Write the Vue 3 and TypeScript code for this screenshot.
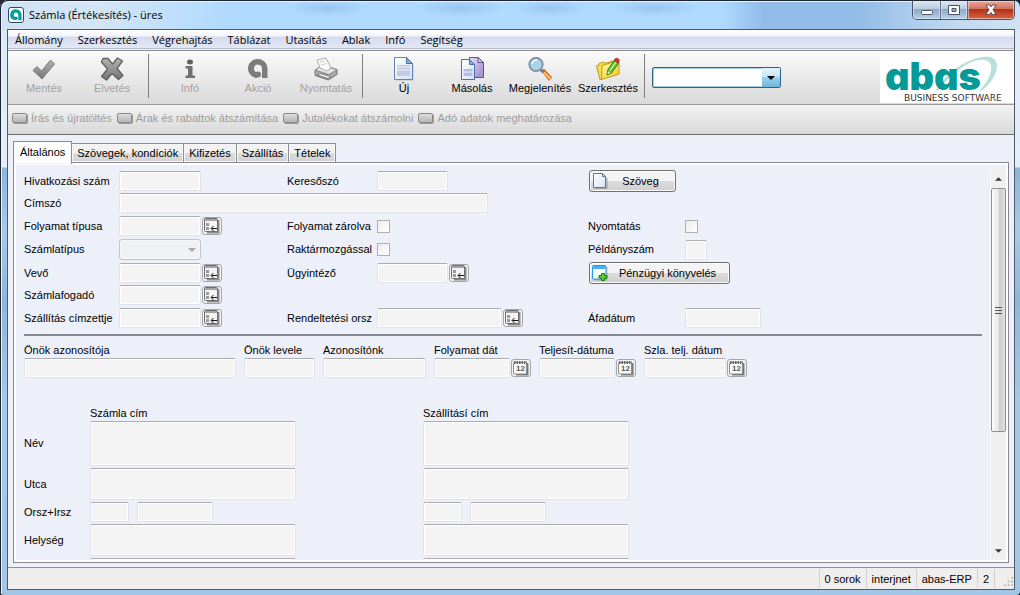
<script setup lang="ts">
interface Tool { id: string; label: string; disabled: boolean }
interface Cell {
  col: number
  id: string
  label: string
  kind: 'text' | 'lookup' | 'select' | 'check' | 'button'
  size: string
  icon?: string
}
interface DateCell { id: string; label: string; size: string; picker: boolean }
interface AddressRow { id: string; label: string; kind: 'tall' | 'medium' | 'split' }

const menus: string[] = ['Állomány', 'Szerkesztés', 'Végrehajtás', 'Táblázat', 'Utasítás', 'Ablak', 'Infó', 'Segítség']

const toolGroups: Tool[][] = [
  [
    { id: 'save', label: 'Mentés', disabled: true },
    { id: 'discard', label: 'Elvetés', disabled: true },
  ],
  [
    { id: 'info', label: 'Infó', disabled: true },
    { id: 'action', label: 'Akció', disabled: true },
    { id: 'print', label: 'Nyomtatás', disabled: true },
  ],
  [
    { id: 'new', label: 'Új', disabled: false },
    { id: 'copy', label: 'Másolás', disabled: false },
    { id: 'view', label: 'Megjelenítés', disabled: false },
    { id: 'edit', label: 'Szerkesztés', disabled: false },
  ],
]

const actions: string[] = ['Írás és újratöltés', 'Árak és rabattok átszámítása', 'Jutalékokat átszámolni', 'Adó adatok meghatározása']
const tabs: string[] = ['Általános', 'Szövegek, kondíciók', 'Kifizetés', 'Szállítás', 'Tételek']

const rows: Cell[][] = [
  [
    { col: 1, id: 'ref', label: 'Hivatkozási szám', kind: 'text', size: 'w-m' },
    { col: 2, id: 'search', label: 'Keresőszó', kind: 'text', size: 'w-s' },
    { col: 3, id: 'note', label: 'Szöveg', kind: 'button', size: 'b-s', icon: 'page' },
  ],
  [{ col: 1, id: 'title', label: 'Címszó', kind: 'text', size: 'w-xl' }],
  [
    { col: 1, id: 'ptype', label: 'Folyamat típusa', kind: 'lookup', size: 'w-m' },
    { col: 2, id: 'locked', label: 'Folyamat zárolva', kind: 'check', size: '' },
    { col: 3, id: 'printing', label: 'Nyomtatás', kind: 'check', size: '' },
  ],
  [
    { col: 1, id: 'itype', label: 'Számlatípus', kind: 'select', size: 'w-m' },
    { col: 2, id: 'stock', label: 'Raktármozgással', kind: 'check', size: '' },
    { col: 3, id: 'copies', label: 'Példányszám', kind: 'text', size: 'w-xs' },
  ],
  [
    { col: 1, id: 'customer', label: 'Vevő', kind: 'lookup', size: 'w-m' },
    { col: 2, id: 'clerk', label: 'Ügyintéző', kind: 'lookup', size: 'w-s' },
    { col: 3, id: 'posting', label: 'Pénzügyi könyvelés', kind: 'button', size: 'b-l', icon: 'addwin' },
  ],
  [{ col: 1, id: 'payer', label: 'Számlafogadó', kind: 'lookup', size: 'w-m' }],
  [
    { col: 1, id: 'shipto', label: 'Szállítás címzettje', kind: 'lookup', size: 'w-m' },
    { col: 2, id: 'country', label: 'Rendeltetési orsz', kind: 'lookup', size: 'w-l' },
    { col: 3, id: 'vatdate', label: 'Áfadátum', kind: 'text', size: 'w-d' },
  ],
]

const dates: DateCell[] = [
  { id: 'yourid', label: 'Önök azonosítója', size: 'w-yid', picker: false },
  { id: 'yourletter', label: 'Önök levele', size: 'w-s', picker: false },
  { id: 'ourid', label: 'Azonosítónk', size: 'w-oid', picker: false },
  { id: 'pdate', label: 'Folyamat dát', size: 'w-d', picker: true },
  { id: 'sdate', label: 'Teljesít-dátuma', size: 'w-d', picker: true },
  { id: 'idate', label: 'Szla. telj. dátum', size: 'w-m', picker: true },
]

const addressRows: AddressRow[] = [
  { id: 'name', label: 'Név', kind: 'tall' },
  { id: 'street', label: 'Utca', kind: 'medium' },
  { id: 'zip', label: 'Orsz+Irsz', kind: 'split' },
  { id: 'city', label: 'Helység', kind: 'medium' },
]
const addressSides: string[] = ['bill', 'ship']
const status: string[] = ['0 sorok', 'interjnet', 'abas-ERP', '2']
</script>

<template>
  <div class="window">
    <svg class="defs" aria-hidden="true">
      <defs>
        <linearGradient id="gGrey" x1="0" y1="0" x2="0" y2="1">
          <stop offset="0" stop-color="#b4b4b4" /><stop offset="1" stop-color="#747474" />
        </linearGradient>
        <linearGradient id="gPage" x1="0" y1="0" x2="1" y2="1">
          <stop offset="0" stop-color="#fff" /><stop offset="1" stop-color="#d3e3f5" />
        </linearGradient>
        <linearGradient id="gPurple" x1="0" y1="0" x2="1" y2="1">
          <stop offset="0" stop-color="#e4dcf5" /><stop offset="1" stop-color="#9c87cc" />
        </linearGradient>
        <linearGradient id="gFolder" x1="0" y1="0" x2="1" y2="1">
          <stop offset="0" stop-color="#fffbb0" /><stop offset="1" stop-color="#f5c913" />
        </linearGradient>
      </defs>
      <symbol id="i-save" viewBox="0 0 24 24">
        <path d="M1 13.500L5 9.500L9.500 14L18.500 3L22.500 7L10 22Z" fill="url(#gGrey)" stroke="#7d7d7d" stroke-linejoin="round" />
      </symbol>
      <symbol id="i-discard" viewBox="0 0 24 24">
        <path d="M3 1.500L8 1.500L12.500 7L17.500 1L22.500 4L17 11.500L23 18.500L18.500 22.500L12 16.500L6.500 23L1.500 19.500L7.500 12L1.500 5Z" fill="url(#gGrey)" stroke="#626262" stroke-width="1.300" stroke-linejoin="round" />
      </symbol>
      <symbol id="i-info" viewBox="0 0 24 24">
        <ellipse cx="12" cy="5" rx="3" ry="2.500" fill="#606060" />
        <path d="M7.500 9H14.500V18.500H17V21H7.500V18.500H10V11.500H7.500Z" fill="#707070" />
      </symbol>
      <symbol id="i-a" viewBox="0 0 24 24">
        <path d="M12 2A9.500 9.500 0 0 0 8.500 20.500L9.500 21H11V15.500A4 4 0 1 1 16 11.500V21H21.500V12A9.500 9.500 0 0 0 12 2Z" fill="currentColor" />
        <circle cx="12" cy="17.500" r="3" fill="currentColor" />
      </symbol>
      <symbol id="i-print" viewBox="0 0 24 24">
        <path d="M1 13L8 8.500L23 12.500V17.500L14.500 23L1 18.500Z" fill="#aaa" stroke="#777" stroke-linejoin="round" />
        <path d="M1 13L8 8.500L23 12.500L15 17.500Z" fill="#e4e4e4" stroke="#888" stroke-linejoin="round" />
        <path d="M6 11L3 3L12 1L17 11L12.500 14Z" fill="#fbfbfb" stroke="#aaa" stroke-linejoin="round" />
        <path d="M6 5L11 3.800M7 8L12.500 6.500" stroke="#ccc" />
        <path d="M3 18L14 21.500L17 19.500L6 16.500Z" fill="#f6f6f6" stroke="#777" />
      </symbol>
      <symbol id="i-new" viewBox="0 0 24 24">
        <path d="M3.500 1.500H15L21.500 8V23.500H3.500Z" fill="#8f98a8" opacity=".5" />
        <path d="M2.500 .5H14.500L20.500 6.500V22.500H2.500Z" fill="url(#gPage)" stroke="#6384b4" />
        <path d="M14.500 .5V6.500H20.500Z" fill="#7eb2e0" stroke="#4d719f" />
        <path d="M5 8H18V19H5Z" fill="#c2cbe6" /><path d="M5 10H18M5 13H18" stroke="#eef2fb" />
      </symbol>
      <symbol id="i-copy" viewBox="0 0 24 24">
        <path d="M9.500 .5H18L23.500 5.500V20.500H9.500Z" fill="url(#gPurple)" stroke="#5f5095" />
        <path d="M18 .5V5.500H23.500Z" fill="#d9d0f0" stroke="#5f5095" />
        <path d="M1.500 2.500H9.500L14.500 7.500V22.500H1.500Z" fill="url(#gPage)" stroke="#4d6fa8" />
        <path d="M9.500 2.500V7.500H14.500Z" fill="#7eb2e0" stroke="#4d6fa8" />
        <path d="M3.500 12H12.500V19H3.500Z" fill="#b3bfe2" /><path d="M3.500 15H12.500" stroke="#eef2fb" />
      </symbol>
      <symbol id="i-view" viewBox="0 0 24 24">
        <path d="M13.500 13.500L16 12L24 20.500L21 23.500Z" fill="#ee7c1c" stroke="#a8652c" stroke-width=".7" />
        <path d="M15 14.500L22.500 22" stroke="#ffd08a" stroke-width="1.500" />
        <path d="M12 12L15.500 15.500" stroke="#777" stroke-width="2.500" />
        <circle cx="8" cy="7.500" r="6.700" fill="#a9d3e8" stroke="#7d909e" stroke-width="1.800" />
        <path d="M4 7A4.500 4.500 0 0 1 9 3.200" fill="none" stroke="#e5f5fc" stroke-width="1.800" />
      </symbol>
      <symbol id="i-edit" viewBox="0 0 24 24">
        <path d="M.5 9L3 8V6.500L8 5L9 6.500L17 4V17L4 22.500Z" fill="#f8df48" stroke="#b9971c" />
        <path d="M6 8.500L19 4.500L23 6V17L5.500 22.500Z" fill="url(#gFolder)" stroke="#bd9a12" stroke-linejoin="round" />
        <path d="M12 12.500L19 2.500L23 5.500L15.500 16L11 18Z" fill="#68c63b" stroke="#2f7a1c" />
        <path d="M14 13L20 5" stroke="#b7ef93" stroke-width="1.300" />
        <path d="M18 3.500L19.500 1.500Q22 .5 23.500 3L22 6Z" fill="#e03428" stroke="#9d1f18" stroke-width=".7" />
        <path d="M11 18L12 14L14.500 16Z" fill="#f5d5a0" /><path d="M11 18L11.500 16.500L12.500 17.200Z" fill="#333" />
      </symbol>
      <symbol id="i-page" viewBox="0 0 16 16">
        <path d="M3 2H12L15.500 5.500V16H3Z" fill="#8a8a8a" opacity=".6" />
        <path d="M1.500 .5H10.500L13.500 3.500V14.500H1.500Z" fill="url(#gPage)" stroke="#5b78a5" />
        <path d="M10.500 .5V3.500H13.500Z" fill="#e7f0fb" stroke="#5b78a5" />
      </symbol>
      <symbol id="i-addwin" viewBox="0 0 16 16">
        <path d="M2 2H15.500V15.500H2Z" fill="#8a8a8a" opacity=".5" />
        <rect x=".5" y=".5" width="13.500" height="13.500" rx="1" fill="#fff" stroke="#2196e8" />
        <path d="M.5 1H14V4H.5Z" fill="#48b0f5" />
        <path d="M9.500 8.500H12.500V10.500H15V13H12.500V15.500H9.500V13H7V10.500H9.500Z" fill="#5fd02f" stroke="#177d0b" />
      </symbol>
      <symbol id="i-lookup" viewBox="0 0 16 16">
        <path d="M3 2H15.500V15.500H3Z" fill="#8a8a8a" />
        <rect x=".5" y=".5" width="13" height="13" rx="1" fill="#f4f4f4" stroke="#6e6e6e" />
        <path d="M1 1H13V3H1Z" fill="#a4a4a4" />
        <path d="M2 5H5V8H2ZM2 9H5V12H2Z" fill="#9a9a9a" />
        <path d="M13 10.500H7.500M9.500 8L7 10.500L9.500 13" fill="none" stroke="#111" />
      </symbol>
    </svg>

    <header class="titlebar">
      <span class="app-icon"><svg viewBox="0 0 24 24"><use href="#i-a" /></svg></span>
      <h1>Számla (Értékesítés) - üres</h1>
      <div class="caption">
        <button class="cap min" type="button" aria-label="Kis méret"><svg viewBox="0 0 14 14"><rect x="1.500" y="7.500" width="11" height="4" rx="1" fill="#fff" stroke="#4c5670" /></svg></button>
        <button class="cap max" type="button" aria-label="Teljes méret"><svg viewBox="0 0 14 14"><path d="M1.500 2.500H12.500V11.500H1.500ZM5 5.500V8.500H9V5.500Z" fill="#fff" fill-rule="evenodd" stroke="#4c5670" /></svg></button>
        <button class="cap close" type="button" aria-label="Bezárás"><svg viewBox="0 0 14 14"><path d="M2 2H5.500L7 4L8.500 2H12L9 6.700L12 11.500H8.500L7 9.300L5.500 11.500H2L5 6.700Z" fill="#fff" stroke="#5a4550" stroke-width=".9" /></svg></button>
      </div>
    </header>

    <div class="client">
      <nav class="menubar">
        <button v-for="m in menus" :key="m" type="button">{{ m }}</button>
      </nav>

      <div class="toolbar">
        <div v-for="(g, i) in toolGroups" :key="i" class="group">
          <button v-for="t in g" :key="t.id" type="button" class="tool" :disabled="t.disabled">
            <svg viewBox="0 0 24 24"><use :href="t.id === 'action' ? '#i-a' : '#i-' + t.id" /></svg>
            <span>{{ t.label }}</span>
          </button>
        </div>
        <div class="combo">
          <input type="text" aria-label="Parancs" />
          <button type="button" aria-label="Lista megnyitása"><svg viewBox="0 0 8 4"><path d="M0 0H8L4 4Z" /></svg></button>
        </div>
        <div class="logo">
          <svg viewBox="0 0 134 51" role="img" aria-label="abas business software">
            <path d="M56 38C72 12 98 3 110 5C124 9 115 30 101 39L99 39C110 28 117 11 105 8C93 6 74 18 59 38Z" fill="#b9e0dc" />
            <text x="5" y="38" class="brand">abas</text>
            <text x="24" y="49" class="claim">BUSINESS SOFTWARE</text>
          </svg>
        </div>
      </div>

      <div class="actionbar">
        <button v-for="a in actions" :key="a" type="button" disabled><i></i>{{ a }}</button>
      </div>

      <main class="body">
        <div class="tabs" role="tablist">
          <button v-for="(t, i) in tabs" :key="t" type="button" role="tab" :aria-selected="i === 0" :class="{ active: i === 0 }">{{ t }}</button>
        </div>
        <section class="panel">
          <form class="sheet" @submit.prevent>
            <div class="fields">
              <div v-for="(r, i) in rows" :key="i" class="row">
                <template v-for="c in r" :key="c.id">
                  <button v-if="c.kind === 'button'" type="button" class="push" :class="c.size">
                    <svg viewBox="0 0 16 16"><use :href="'#i-' + c.icon" /></svg><span>{{ c.label }}</span>
                  </button>
                  <template v-else>
                    <label :for="c.id" :class="'l' + c.col">{{ c.label }}</label>
                    <div class="control" :class="'c' + c.col">
                      <input v-if="c.kind === 'check'" :id="c.id" type="checkbox" disabled />
                      <select v-else-if="c.kind === 'select'" :id="c.id" :class="c.size" disabled><option></option></select>
                      <input v-else :id="c.id" type="text" class="box" :class="c.size" disabled />
                      <button v-if="c.kind === 'lookup'" type="button" class="mini" :aria-label="c.label + ' keresése'"><svg viewBox="0 0 16 16"><use href="#i-lookup" /></svg></button>
                    </div>
                  </template>
                </template>
              </div>
            </div>
            <hr />
            <div class="dates">
              <div v-for="d in dates" :key="d.id" class="date">
                <label :for="d.id">{{ d.label }}</label>
                <div class="control">
                  <input :id="d.id" type="text" class="box" :class="d.size" disabled />
                  <button v-if="d.picker" type="button" class="mini" :aria-label="d.label + ' naptár'">
                    <svg viewBox="0 0 16 16">
                      <path d="M3 3H15.500V15.500H3Z" fill="#777" />
                      <rect x=".5" y="2.500" width="13" height="11.500" rx="1" fill="#fafafa" stroke="#8a8a8a" />
                      <path d="M1 2.500H14" stroke="#6a6a6a" stroke-width="3" stroke-dasharray="1.500 1" />
                      <text x="3" y="11" class="day">12</text>
                    </svg>
                  </button>
                </div>
              </div>
            </div>
            <div class="address">
              <span></span><span class="head">Számla cím</span><span class="head">Szállításí cím</span>
              <template v-for="r in addressRows" :key="r.id">
                <label :for="'bill-' + r.id">{{ r.label }}</label>
                <div v-for="s in addressSides" :key="s" class="cell">
                  <template v-if="r.kind === 'split'">
                    <input :id="s + '-' + r.id" type="text" class="box w-c" disabled :aria-label="r.label" />
                    <input type="text" class="box w-d" disabled :aria-label="r.label" />
                  </template>
                  <textarea v-else :id="s + '-' + r.id" class="box" :class="r.kind" disabled :aria-label="r.label"></textarea>
                </div>
              </template>
              <span></span>
              <div v-for="s in addressSides" :key="s" class="cell"><textarea class="box medium" disabled aria-label="További címadat"></textarea></div>
            </div>
          </form>
          <div class="scroll">
            <button type="button" aria-label="Fel"><svg viewBox="0 0 8 4"><path d="M0 4H8L4 0Z" /></svg></button>
            <div class="track"><div class="thumb"><i></i><i></i><i></i></div></div>
            <button type="button" aria-label="Le"><svg viewBox="0 0 8 4"><path d="M0 0H8L4 4Z" /></svg></button>
          </div>
        </section>
      </main>

      <footer class="status">
        <span v-for="s in status" :key="s">{{ s }}</span>
        <span class="grip"><svg viewBox="0 0 12 12"><path d="M9 1h2v2h-2zM5 5h2v2h-2zM9 5h2v2h-2zM1 9h2v2h-2zM5 9h2v2h-2zM9 9h2v2h-2z" fill="#b9b9b9" /></svg></span>
      </footer>
    </div>
  </div>
</template>

<style>
body { margin: 0; background: #23242c; }
</style>

<style scoped>
* { box-sizing: border-box; }
.defs { position: absolute; width: 0; height: 0; }
button, input, select, textarea { font: inherit; color: inherit; margin: 0; padding: 0; border: 0; background: none; }
svg { display: block; }

.window {
  height: 100vh; display: flex; flex-direction: column; padding: 0 5px 5px 7px;
  font: 11px/15px "Liberation Sans", sans-serif; color: #000;
  border-radius: 7px 7px 4px 4px;
  box-shadow: inset 1px 1px 0 #1f2530, inset 2px 2px 0 #e4f3fd;
  background:
    radial-gradient(ellipse 40px 9px at 328px 8px, #7fb0df77, transparent),
    radial-gradient(ellipse 45px 9px at 460px 8px, #7fb0df77, transparent),
    radial-gradient(ellipse 36px 9px at 550px 8px, #7fb0df77, transparent),
    radial-gradient(ellipse 45px 9px at 655px 8px, #7fb0df77, transparent),
    linear-gradient(90deg, #cfe1f4 0, #d3e5f6 100px, #b0daff 230px, #b0daff 720px, #92bce8 765px, #93bde7 860px, #c4daf1 960px, #cfe1f3 100%) top / 100% 30px no-repeat,
    linear-gradient(#dbe9f7 0, #e2eefa 167px, #8bb4dc 168px, #a9c9e8 230px, #8fb6db 300px, #a6c8e8 400px, #a3c6e6 100%);
}
.titlebar { height: 29px; flex: none; display: flex; align-items: flex-start; font: 11px/16px "Open Sans", "Noto Sans", sans-serif; }
.app-icon { width: 16px; height: 16px; margin: 7px 5px 0 1px; border: 1px solid #2c4a5c; border-radius: 3px; background: #fff; color: #0b9a9c; }
.app-icon svg { width: 14px; height: 14px; }
h1 { margin: 7px 0 0; font: inherit; flex: 1; }
.caption { display: flex; height: 20px; border: 1px solid #49566a; border-top-color: #1f2530; border-radius: 0 0 5px 5px; overflow: hidden; }
.cap { display: grid; place-items: center; background: linear-gradient(#dce7f2, #b8cade 45%, #8fa8c3 46%, #b9d2ea); box-shadow: inset 0 0 0 1px #e6f0fa88; }
.cap svg { width: 14px; height: 14px; }
.min { width: 28px; border-right: 1px solid #5c6c82; }
.max { width: 27px; border-right: 1px solid #5c6c82; }
.close { width: 46px; background: linear-gradient(#e8a898, #d2705c 45%, #b3301a 46%, #d9633f); }

.client { flex: 1; min-height: 0; display: flex; flex-direction: column; border: 1px solid #4d5b69; background: #edf0f9; }

.menubar { height: 21px; flex: none; display: flex; align-items: center; gap: 1px; background: linear-gradient(#fff 0, #f3f5fb 6px, #d5daee 7px, #e3e8f5 18px, #b5bbca 18px, #b5bbca 19px, #f2f2f2 19px); border-bottom: 1px solid #8e8e8e; font: 11px/16px "Open Sans", "Noto Sans", sans-serif; }
.menubar button { padding: 0 7px; }

.toolbar { height: 54px; flex: none; display: flex; border-bottom: 1px solid #9b9b9b; background: linear-gradient(#fafafa, #d9d9d9); }
.group { display: flex; position: relative; padding: 0 3px 0 6px; margin-right: 1px; }
.group:first-child { padding-left: 2px; }
.group::after { content: ""; position: absolute; right: 0; top: 3px; width: 1px; height: 44px; background: #808080; }
.tool { width: 68px; display: flex; flex-direction: column; align-items: center; padding-top: 6px; white-space: nowrap; }
.tool svg { width: 24px; height: 24px; }
.tool:disabled { color: #a2a2a2; }
.tool:disabled svg { color: #7c7c7c; }
.combo { display: flex; width: 129px; height: 21px; margin: 16px 0 0 6px; border: 1px solid #2f638c; border-radius: 2px; background: #fff; box-shadow: inset 0 0 0 1px #a6cde6; }
.combo input { flex: 1; min-width: 0; padding: 0 4px; outline: 0; }
.combo button { width: 18px; display: grid; place-items: center; background: linear-gradient(#e3f3fb, #c6e5f6 48%, #98d0ee 50%, #6fb5dc); }
.combo svg { width: 8px; height: 4px; }
.logo { margin-left: auto; width: 134px; height: 51px; margin-top: 1px; background: #fff; }
.logo svg { width: 134px; height: 51px; }
.brand { font: 900 38px Inter, "Lato", sans-serif; font-feature-settings: "cv11"; fill: #049a98; }
.claim { font: 9px "DejaVu Sans", sans-serif; fill: #333; }
.day { font: bold 8px "Liberation Sans", sans-serif; fill: #555; }

.actionbar { height: 30px; flex: none; display: flex; align-items: center; gap: 5px; padding: 0 4px 3px; border-bottom: 1px solid #6d6d6d; background: linear-gradient(#f2f2f2, #d8d8d8); }
.actionbar button { display: flex; align-items: center; gap: 4px; color: #9c9c9c; white-space: nowrap; }
.actionbar i { width: 15px; height: 10px; border: 1px solid #888; border-radius: 2px; background: linear-gradient(#ddd, #b5b5b5); box-shadow: 1px 1px 0 #999; }

.body { flex: 1; min-height: 0; display: flex; flex-direction: column; padding: 6px 5px 4px; }
.tabs { display: flex; align-items: flex-end; height: 21px; flex: none; }
.tabs button { height: 19px; padding: 0 5px; border: 1px solid #8c8f97; border-bottom: 0; margin-left: -1px; background: linear-gradient(#f3f3f3 50%, #dcdcdc 51%, #d2d2d2); white-space: nowrap; box-shadow: inset 0 0 0 1px #f6f6f6; }
.tabs .active { height: 23px; margin: 0 0 -2px; padding: 0 6px 2px; background: #fff; position: relative; }
.panel { flex: 1; min-height: 0; display: flex; border: 1px solid #868993; background: #edf0f9; box-shadow: inset 0 0 0 2px #fff; padding: 2px; }
.sheet { flex: 1; min-width: 0; overflow: hidden; padding: 5px 8px 0; }
.fields { display: grid; gap: 3px; }
.row { display: grid; grid-template-columns: 95px 168px 90px 211px 97px 1fr; height: 20px; align-items: center; white-space: nowrap; }
.control { display: flex; align-items: center; gap: 1px; }
.l1 { grid-column: 1; } .c1 { grid-column: 2; }
.l2 { grid-column: 3; } .c2 { grid-column: 4; }
.l3 { grid-column: 5; } .c3 { grid-column: 6; }
.box { display: block; flex: none; height: 20px; border: 1px solid #dfe2ea; border-top-color: #abadb3; border-radius: 2px; background: #f4f4f4; box-shadow: inset 0 0 0 1px #fff; resize: none; }
.w-xs { width: 22px; } .w-c { width: 39px; } .w-s { width: 71px; } .w-d { width: 76px; } .w-m { width: 82px; }
.w-oid { width: 103px; } .w-l { width: 125px; } .w-yid { width: 212px; } .w-xl { width: 369px; }
.mini { width: 20px; height: 18px; flex: none; display: grid; place-items: center; border: 1px solid #a2a5ab; border-radius: 3px; background: #f5f5f5; }
.mini svg { width: 16px; height: 16px; }
select { appearance: none; height: 21px; border: 1px solid #b0b2b8; border-radius: 3px; background: #f2f2f4; box-shadow: inset 0 0 0 1px #fafafa; }
.control:has(select) { position: relative; width: 82px; }
.control:has(select)::after { content: ""; position: absolute; right: 5px; top: 9px; border: 4px solid transparent; border-top-color: #a8a8a8; border-bottom: 0; }
input[type="checkbox"] { appearance: none; width: 13px; height: 13px; border: 1px solid #b0b0b0; background: linear-gradient(135deg, #ececec, #fff); }
.push { grid-column: 5 / 7; margin-left: 1px; height: 22px; display: flex; align-items: center; padding: 0 2px; border: 1px solid #707070; border-radius: 3px; background: linear-gradient(#f4f4f4 50%, #dcdcdc 51%, #cfcfcf); box-shadow: inset 0 0 0 1px #fafafa; }
.push svg { width: 16px; height: 16px; }
.push span { flex: 1; text-align: center; }
.b-s { width: 87px; } .b-l { width: 141px; }
hr { margin: 6px 0 7px; height: 2px; border: 0; background: #868993; }
.dates { display: flex; gap: 8px; white-space: nowrap; }
.date label { display: block; }
.address { display: grid; grid-template-columns: 66px 333px 1fr; row-gap: 2px; margin-top: 28px; align-items: center; }
.head { margin-bottom: -2px; }
.cell { display: flex; gap: 8px; }
.tall { width: 206px; height: 45px; }
.medium { width: 206px; height: 32px; }

.scroll { width: 16px; margin: 5px 0 0; display: flex; flex-direction: column; background: #f0f0f0; border-left: 1px solid #fafafa; }
.scroll button { height: 18px; display: grid; place-items: center; }
.scroll svg { width: 7px; height: 4px; fill: #333; }
.track { flex: 1; min-height: 0; }
.thumb { height: 69%; width: 15px; display: flex; flex-direction: column; align-items: center; justify-content: center; gap: 2px; border: 1px solid #8f8f8f; border-radius: 2px; background: linear-gradient(90deg, #fbfbfb, #e6e6e6 50%, #cacaca 51%, #e0e0e0); }
.thumb i { width: 7px; height: 1px; background: #555; }

.status { height: 22px; flex: none; display: flex; justify-content: flex-end; align-items: center; border-top: 1px solid #8c8f97; background: #f0eded; }
.status span { height: 19px; line-height: 20px; padding: 0 5px; border-left: 1px solid #d2d0d0; }
.status .grip { width: 20px; padding: 7px 0 0 8px; }
.grip svg { width: 11px; height: 11px; }
</style>
